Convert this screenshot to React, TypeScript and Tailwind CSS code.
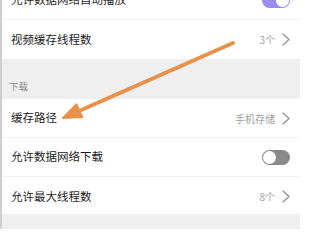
type Row = {
    label: string;
    value?: string;
    toggle?: "on" | "off";
};

const Toggle = ({ on }: { on: boolean }) => (
    <div className={`w-[28px] h-[15px] rounded-full flex items-center px-[1px] ${on ? "bg-[#9c8cf2] justify-end" : "bg-[#8a8a8a] justify-start"}`}>
        <div className="w-[13px] h-[13px] rounded-full bg-white" />
    </div>
);

const Chevron = () => (
    <svg width="8" height="13" viewBox="0 0 8 13" className="text-[#8c8c8c]">
        <polyline points="1,1 7,6.5 1,12" fill="none" stroke="currentColor" strokeWidth="1.2" strokeLinecap="round" strokeLinejoin="round" />
    </svg>
);

const SettingRow = ({ row, last }: { row: Row; last?: boolean }) => (
    <div className={`h-[39px] flex items-center justify-between pl-[9px] pr-[10px] bg-white ${last ? "" : "border-b border-[#f1f1f1]"}`}>
        <span className="text-[11.5px] text-[#1c1c1c]">{row.label}</span>
        {row.toggle ? (
            <Toggle on={row.toggle === "on"} />
        ) : (
            <div className="flex items-center gap-[7px]">
                <span className="text-[10px] text-[#a0a0a0]">{row.value}</span>
                <Chevron />
            </div>
        )}
    </div>
);

export default function App() {
    return (
        <div className="w-[300px] h-[229px] overflow-hidden flex bg-[#efefef]" style={{ fontFamily: '"Noto Sans CJK SC", "Noto Sans", sans-serif' }}>
            <div className="w-[2px] bg-[#cfcfcf] shrink-0" />
            <div className="relative flex-1 flex flex-col">
                <div className="-mt-[19px] flex flex-col">
                    <SettingRow row={{ label: "允许数据网络自动播放", toggle: "on" }} />
                    <SettingRow row={{ label: "视频缓存线程数", value: "3个" }} last />
                </div>
                {/* 下载 section header */}
                <div className="h-[40px] flex items-end pl-[7px] pb-[6px] bg-[#efefef]">
                    <span className="text-[9.5px] text-[#8a8a8a]">下载</span>
                </div>
                <SettingRow row={{ label: "缓存路径", value: "手机存储" }} />
                <SettingRow row={{ label: "允许数据网络下载", toggle: "off" }} />
                <div className="h-[37px]">
                    <SettingRow row={{ label: "允许最大线程数", value: "8个" }} last />
                </div>
                <div className="flex-1 bg-[#efefef]" />
                <svg className="absolute left-[-2px] top-0 pointer-events-none" width="300" height="229" viewBox="0 0 300 229">
                    <line x1="233" y1="43" x2="79" y2="111" stroke="#e8914c" strokeWidth="4" strokeLinecap="round" />
                    <polygon points="63,118 76.5,104.3 82.3,117.1" fill="#e8914c" stroke="#e8914c" strokeWidth="2" strokeLinejoin="round" />
                </svg>
            </div>
        </div>
    );
}
